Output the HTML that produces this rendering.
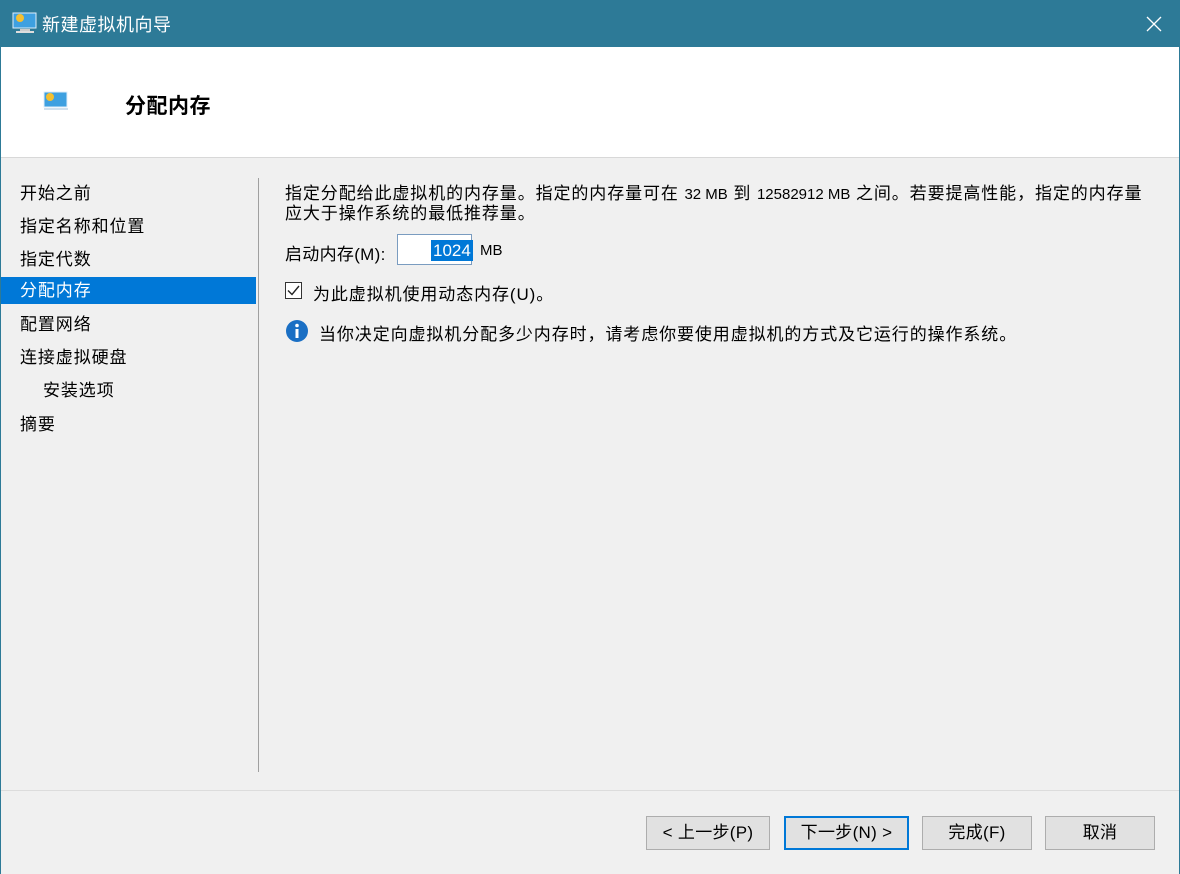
<!DOCTYPE html>
<html><head><meta charset="utf-8"><style>
*{margin:0;padding:0;box-sizing:border-box}
body{width:1180px;height:874px;overflow:hidden;background:#f0f0f0;font-family:"Liberation Sans","Noto Sans CJK SC",sans-serif;font-size:17px;color:#000;position:relative;letter-spacing:0.9px}
.abs{position:absolute}
#title{left:0;top:0;width:1180px;height:47px;background:#2d7a97;color:#fff;font-size:18px}
#frameL{left:0;top:47px;width:1px;height:827px;background:#2d7a97}
#frameR{right:0;top:47px;width:1px;height:827px;background:#2d7a97}
#head{left:1px;top:47px;width:1178px;height:111px;background:#fff;border-bottom:1px solid #d8d8d8}
.nav{left:1px;width:255px;height:27px;line-height:27px;padding-left:19px}
.sel{background:#0078d7;color:#fff}
.btn{top:816px;height:34px;background:#e1e1e1;border:1px solid #adadad;text-align:center;line-height:32px;letter-spacing:0.3px}
.mn{font-size:15px;letter-spacing:0}
</style></head><body>
<div id="title" class="abs">
<svg class="abs" style="left:12px;top:11px" width="26" height="24" viewBox="0 0 26 24"><rect x="1" y="2" width="23" height="15" fill="#3ea0e0" stroke="#dfeefa"/><circle cx="8" cy="7" r="4" fill="#f5c030"/><rect x="8" y="18" width="10" height="2" fill="#ccc"/><rect x="4" y="20" width="18" height="2" fill="#ddd"/></svg>
<div class="abs" style="left:42px;top:11px;letter-spacing:0.5px">新建虚拟机向导</div>
<svg class="abs" style="left:1145px;top:15px" width="18" height="18"><path d="M2 2L16 16M16 2L2 16" stroke="#fff" stroke-width="1.3"/></svg>
</div>
<div id="frameL" class="abs"></div><div id="frameR" class="abs"></div>
<div id="head" class="abs">
<svg class="abs" style="left:42px;top:44px" width="26" height="22" viewBox="0 0 26 22"><rect x="1" y="1" width="23" height="15" fill="#3ea0e0" stroke="#dfeefa"/><circle cx="7" cy="6" r="4" fill="#f5c030"/><rect x="1" y="17" width="24" height="2" fill="#cfe0ee"/></svg>
<div class="abs" style="left:124px;top:43px;font-size:21px;font-weight:bold;letter-spacing:0.5px">分配内存</div>
</div>
<div class="abs nav" style="top:180px">开始之前</div>
<div class="abs nav" style="top:213px">指定名称和位置</div>
<div class="abs nav" style="top:246px">指定代数</div>
<div class="abs nav sel" style="top:277px">分配内存</div>
<div class="abs nav" style="top:311px">配置网络</div>
<div class="abs nav" style="top:344px">连接虚拟硬盘</div>
<div class="abs nav" style="top:377px;padding-left:42px">安装选项</div>
<div class="abs nav" style="top:411px">摘要</div>
<div class="abs" style="left:258px;top:178px;width:1px;height:594px;background:#a0a0a0"></div>
<div class="abs" style="left:285px;top:184px;line-height:19px;width:890px;white-space:nowrap">指定分配给此虚拟机的内存量。指定的内存量可在 <span class="mn">32 MB</span> 到 <span class="mn">12582912 MB</span> 之间。若要提高性能，指定的内存量<br>应大于操作系统的最低推荐量。</div>
<div class="abs" style="left:285px;top:240px;letter-spacing:0.3px">启动内存(M):</div>
<div class="abs" style="left:397px;top:234px;width:75px;height:31px;background:#fff;border:1px solid #7a9cc0"></div>
<div class="abs" style="left:431px;top:240px;height:21px;background:#0078d7;color:#fff;padding:0 2px;line-height:21px;letter-spacing:0">1024</div>
<div class="abs mn" style="left:480px;top:242px">MB</div>
<div class="abs" style="left:285px;top:282px;width:17px;height:17px;border:1px solid #333;background:#fff"></div>
<svg class="abs" style="left:285px;top:282px" width="17" height="17"><path d="M3 8.5L7 12.5L14 4" stroke="#222" stroke-width="1.4" fill="none"/></svg>
<div class="abs" style="left:313px;top:280px">为此虚拟机使用动态内存(U)。</div>
<svg class="abs" style="left:285px;top:319px" width="24" height="24"><circle cx="12" cy="12" r="11" fill="#1a6fc4"/><rect x="10.5" y="10" width="3" height="9" fill="#fff"/><circle cx="12" cy="6.5" r="1.8" fill="#fff"/></svg>
<div class="abs" style="left:319px;top:320px;white-space:nowrap">当你决定向虚拟机分配多少内存时，请考虑你要使用虚拟机的方式及它运行的操作系统。</div>
<div class="abs" style="left:1px;top:790px;width:1178px;height:1px;background:#dcdcdc"></div>
<div class="abs btn" style="left:646px;width:124px">&lt; 上一步(P)</div>
<div class="abs btn" style="left:784px;width:125px;border:2px solid #0078d7;line-height:30px">下一步(N) &gt;</div>
<div class="abs btn" style="left:922px;width:110px">完成(F)</div>
<div class="abs btn" style="left:1045px;width:110px">取消</div>
</body></html>
